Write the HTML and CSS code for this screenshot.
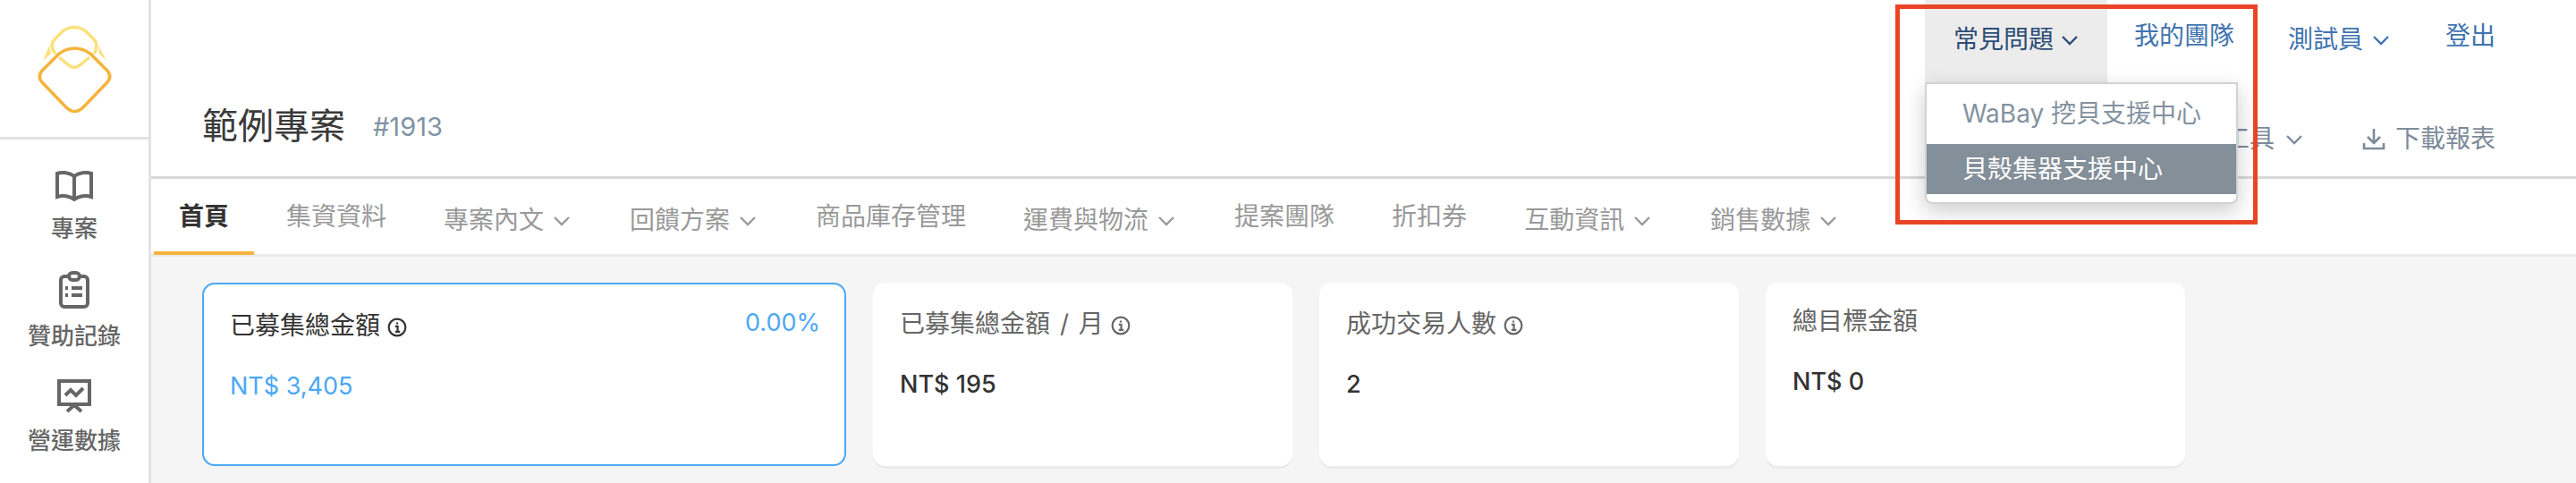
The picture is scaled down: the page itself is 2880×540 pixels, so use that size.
FILE: index.html
```html
<!DOCTYPE html>
<html>
<head>
    <title>範例專案</title>
    <link rel="stylesheet" href="styles.css">
</head>
<body>
    <div class="app">
        <aside class="sidebar">
            <div class="logo">
                <svg width="88" height="105" viewBox="39 25 88 105" fill="none">
                    <path d="M62 60C57 54 57 48 62 43L70 35C78 29 88 29 96 35L104 43C109 48 109 54 105 60" stroke="#fde07c" stroke-width="3.5"/>
                    <path d="M66 64L77 73C81 76 85 76 89 73L100 64" stroke="#fde07c" stroke-width="3.5"/>
                    <path d="M55 51L48 68L57 60Z" fill="#fde07c"/>
                    <path d="M110 51L119 68L111 60Z" fill="#fde07c"/>
                    <path d="M83.5 54C92 54 100 58 106 65L119 78C124 83 124 88 119 93L93 120C87 126 80 126 74 120L48 93C43 88 43 83 48 78L61 65C67 58 75 54 83.5 54Z" stroke="#f5b33c" stroke-width="3.5"/>
                </svg>
            </div>
            <a class="side-item side-book">
                <svg width="42" height="34" viewBox="0 0 42 34" fill="none" stroke="#666" stroke-width="4">
                    <path d="M21 6C16 2 8 1 2 3V29C8 27 16 28 21 32C26 28 34 27 40 29V3C34 1 26 2 21 6ZM21 6V32"/>
                </svg>
                <span>專案</span>
            </a>
            <a class="side-item side-clip">
                <svg width="34" height="42" viewBox="0 0 34 42" fill="none" stroke="#666" stroke-width="4">
                    <rect x="2" y="6" width="30" height="34" rx="4"/>
                    <rect x="11" y="2" width="12" height="8" rx="4" fill="#fff"/>
                    <path d="M14 19H26M14 27H26M7 19H10M7 27H10"/>
                </svg>
                <span>贊助記錄</span>
            </a>
            <a class="side-item side-chart">
                <svg width="38" height="38" viewBox="0 0 38 38" fill="none" stroke="#666" stroke-width="4">
                    <rect x="2" y="2" width="34" height="26"/>
                    <path d="M9 18L15 12L21 18L29 10M11 36L19 29L27 36"/>
                </svg>
                <span>營運數據</span>
            </a>
        </aside>

        <main class="main">
            <header class="header">
                <nav class="topnav">
                    <div class="nav-item nav-open">常見問題<svg class="chev" viewBox="0 0 24 24"><path d="M4 8L12 16L20 8"/></svg>
                        <div class="dropdown">
                            <a class="drop-link">WaBay 挖貝支援中心</a>
                            <a class="drop-link drop-active">貝殼集器支援中心</a>
                        </div>
                    </div>
                    <div class="nav-item nav-link">我的團隊</div>
                    <div class="nav-item nav-user">測試員<svg class="chev" viewBox="0 0 24 24"><path d="M4 8L12 16L20 8"/></svg></div>
                    <div class="nav-item nav-link">登出</div>
                </nav>
                <div class="title-row">
                    <h1 class="title">範例專案</h1>
                    <span class="project-id">#1913</span>
                    <div class="actions">
                        <span class="action action-tools">工具<svg class="chev" viewBox="0 0 24 24"><path d="M4 8L12 16L20 8"/></svg></span>
                        <span class="action action-dl">
                            <svg class="dl-icon" width="26" height="26" viewBox="0 0 26 26"><path d="M13 2V18M6 11L13 18L20 11M2 18V24H24V18"/></svg>下載報表
                        </span>
                    </div>
                </div>
            </header>

            <div class="tabs">
                <a class="tab tab-active">首頁</a>
                <a class="tab">集資資料</a>
                <a class="tab tab-drop">專案內文<svg class="chev" viewBox="0 0 24 24"><path d="M4 8L12 16L20 8"/></svg></a>
                <a class="tab tab-drop">回饋方案<svg class="chev" viewBox="0 0 24 24"><path d="M4 8L12 16L20 8"/></svg></a>
                <a class="tab">商品庫存管理</a>
                <a class="tab tab-drop">運費與物流<svg class="chev" viewBox="0 0 24 24"><path d="M4 8L12 16L20 8"/></svg></a>
                <a class="tab">提案團隊</a>
                <a class="tab">折扣券</a>
                <a class="tab tab-drop">互動資訊<svg class="chev" viewBox="0 0 24 24"><path d="M4 8L12 16L20 8"/></svg></a>
                <a class="tab tab-drop">銷售數據<svg class="chev" viewBox="0 0 24 24"><path d="M4 8L12 16L20 8"/></svg></a>
            </div>

            <section class="cards">
                <div class="card card-active">
                    <div class="card-head">
                        <span class="card-title">已募集總金額<svg class="info" viewBox="0 0 20 20"><circle cx="10" cy="10" r="8.5"/><path d="M8 9H10.5V14.5M8 14.5H13M10 5V6.8"/></svg></span>
                        <span class="card-rate">0.00%</span>
                    </div>
                    <div class="card-value">NT$ 3,405</div>
                </div>
                <div class="card">
                    <div class="card-head">
                        <span class="card-title">已募集總金額 / 月<svg class="info" viewBox="0 0 20 20"><circle cx="10" cy="10" r="8.5"/><path d="M8 9H10.5V14.5M8 14.5H13M10 5V6.8"/></svg></span>
                    </div>
                    <div class="card-value">NT$ 195</div>
                </div>
                <div class="card">
                    <div class="card-head">
                        <span class="card-title">成功交易人數<svg class="info" viewBox="0 0 20 20"><circle cx="10" cy="10" r="8.5"/><path d="M8 9H10.5V14.5M8 14.5H13M10 5V6.8"/></svg></span>
                    </div>
                    <div class="card-value">2</div>
                </div>
                <div class="card card-plain">
                    <div class="card-head">
                        <span class="card-title">總目標金額</span>
                    </div>
                    <div class="card-value">NT$ 0</div>
                </div>
            </section>
        </main>
    </div>
    <div class="highlight"></div>
</body>
</html>
```

FILE: styles.css
```css
/* Page */
html, body {
    margin: 0;
    height: 540px;
    overflow: hidden;
    background-color: #fff;
}
body {
    font-family: Inter, "Noto Sans CJK TC", sans-serif;
    font-size: 28px;
    color: #333;
}
.app {
    display: flex;
    height: 540px;
}

/* Sidebar */
.sidebar {
    width: 166px;
    flex: none;
    border-right: 3px solid #e2e2e2;
    background-color: #fff;
}
.logo {
    height: 128px;
    padding-top: 25px;
    border-bottom: 3px solid #e2e2e2;
    text-align: center;
}
.side-item {
    display: flex;
    flex-direction: column;
    align-items: center;
    color: #666;
    font-size: 26px;
    font-weight: 500;
    line-height: 36px;
}
.side-item span {
    display: block;
}
.side-book {
    padding-top: 35px;
}
.side-book span {
    margin-top: 13px;
}
.side-clip {
    padding-top: 29px;
}
.side-clip span {
    margin-top: 13px;
}
.side-chart {
    padding-top: 30px;
}
.side-chart span {
    margin-top: 13px;
}

/* Header */
.main {
    flex: 1;
    min-width: 0;
    background-color: #f5f5f5;
}
.header {
    height: 197px;
    border-bottom: 3px solid #d9d9d9;
    background-color: #fff;
}
.topnav {
    display: flex;
    justify-content: flex-end;
    height: 92px;
    padding-right: 60px;
}
.nav-item {
    position: relative;
    padding: 24px 30px 0;
    line-height: 40px;
    color: #3f73b0;
}
.nav-link {
    padding-top: 20px;
}
.nav-open {
    padding-left: 32px;
    padding-right: 30px;
    background-color: #ececec;
    color: #2d4d75;
}
.chev {
    width: 24px;
    height: 24px;
    margin-left: 8px;
    vertical-align: -3px;
    fill: none;
    stroke: currentColor;
    stroke-width: 2.4;
}
.nav-open .chev {
    margin-left: 6px;
}
.dropdown {
    position: absolute;
    top: 92px;
    left: 0;
    width: 346px;
    height: 132px;
    border: 2px solid #d2d2d2;
    border-radius: 0 0 8px 8px;
    background-color: #fff;
    box-shadow: 0 8px 24px rgba(0, 0, 0, 0.2);
    z-index: 5;
}
.drop-link {
    display: block;
    height: 67px;
    padding: 0 0 0 40px;
    line-height: 67px;
    color: #84929f;
    white-space: nowrap;
}
.drop-active {
    height: 56px;
    line-height: 56px;
    background-color: #838f99;
    color: #fff;
}
.title-row {
    display: flex;
    align-items: center;
    height: 98px;
    padding: 0 90px 7px 57px;
}
.title {
    margin: 0;
    font-size: 40px;
    font-weight: 400;
    line-height: 50px;
    color: #3a3a3a;
}
.project-id {
    margin-left: 31px;
    font-size: 29px;
    color: #8093a5;
}
.actions {
    display: flex;
    align-self: flex-start;
    margin-top: 43px;
    margin-left: auto;
    line-height: 40px;
    color: #7d8b99;
}
.action-tools .chev {
    margin-left: 10px;
}
.action-dl {
    display: flex;
    align-items: center;
    margin-left: 64px;
}
.dl-icon {
    margin-right: 11px;
    fill: none;
    stroke: currentColor;
    stroke-width: 2.6;
}

/* Tabs */
.tabs {
    display: flex;
    gap: 8px;
    height: 84px;
    padding-left: 3px;
    border-bottom: 3px solid #e9e9e9;
    background-color: #fff;
}
.tab {
    height: 85px;
    box-sizing: border-box;
    padding: 22px 28px 0;
    line-height: 40px;
    color: #999;
    white-space: nowrap;
}
.tab-drop {
    padding-top: 26px;
}
.tab-active {
    border-bottom: 4px solid #f5b33c;
    color: #333;
    font-weight: 700;
}

/* Cards */
.cards {
    display: flex;
    gap: 30px;
    padding: 29px 0 0 57px;
}
.card {
    position: relative;
    width: 469px;
    height: 205px;
    box-sizing: border-box;
    padding: 26px 30px;
    border-radius: 14px;
    background-color: #fff;
    box-shadow: 0 3px 0 #ebebeb;
}
.card-active {
    width: 720px;
    padding: 26px 29px;
    border: 2px solid #4aa8f5;
    box-shadow: none;
}
.card-head {
    display: flex;
    justify-content: space-between;
    height: 40px;
    line-height: 40px;
}
.card-title {
    color: #666;
    word-spacing: 3px;
}
.card-active .card-title {
    color: #333;
}
.info {
    width: 22px;
    height: 22px;
    margin-left: 8px;
    vertical-align: -3px;
    fill: none;
    stroke: currentColor;
    stroke-width: 2;
}
.card-rate {
    margin-top: -3px;
    margin-right: -2px;
    font-size: 27px;
    color: #4aa8f5;
}
.card-value {
    margin-top: 28px;
    font-size: 27px;
    font-weight: 500;
    line-height: 40px;
    color: #333;
}
.card-active .card-value {
    font-weight: 400;
    color: #4aa8f5;
}
.card-plain .card-head {
    margin-top: -3px;
}

/* Annotation box over the screenshot */
.highlight {
    position: absolute;
    left: 2119px;
    top: 5px;
    width: 395px;
    height: 236px;
    border: 5px solid #e94425;
    z-index: 10;
}
```
